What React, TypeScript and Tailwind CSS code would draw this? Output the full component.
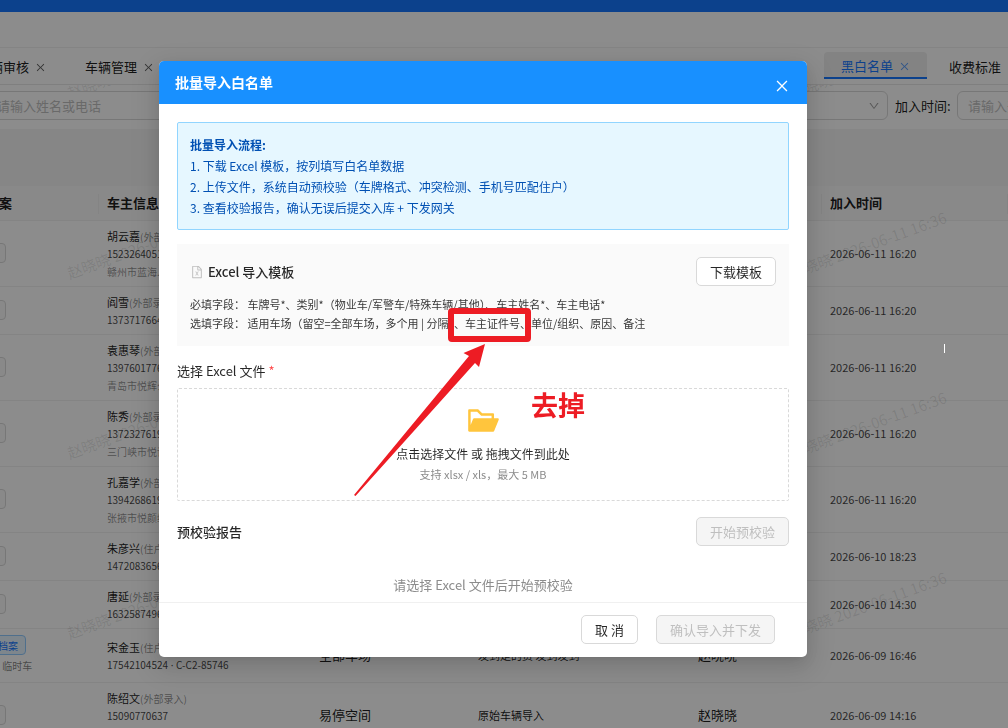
import React from 'react';
import { AiFillFolderOpen, AiOutlineClose, AiOutlineDown, AiOutlineFileExcel } from 'react-icons/ai';

const tabs = ['车辆审核', '车辆管理', '车位管理', '车场管理', '月卡管理', '订单管理', '通行记录', '设备管理', '黑白名单', '收费标准'];

type Row = {
  name: string;
  source: string;
  phone: string;
  room?: string;
  address?: string;
  lot: string;
  reason: string;
  time: string;
};

const rows: Row[] = [
  { name: '胡云嘉', source: '(外部录入)', phone: '15232640518', address: '赣州市蓝海人家', lot: '全部车场', reason: '原始车辆导入', time: '2026-06-11 16:20' },
  { name: '阎雪', source: '(外部录入)', phone: '13737176643', lot: '全部车场', reason: '原始车辆导入', time: '2026-06-11 16:20' },
  { name: '袁惠琴', source: '(外部录入)', phone: '13976017765', address: '青岛市悦辉公司', lot: '全部车场', reason: '原始车辆导入', time: '2026-06-11 16:20' },
  { name: '陈秀', source: '(外部录入)', phone: '13723276190', address: '三门峡市悦评', lot: '全部车场', reason: '原始车辆导入', time: '2026-06-11 16:20' },
  { name: '孔嘉学', source: '(外部录入)', phone: '13942686197', address: '张掖市悦颜维', lot: '全部车场', reason: '原始车辆导入', time: '2026-06-11 16:20' },
  { name: '朱彦兴', source: '(住户)', phone: '14720836561', lot: '全部车场', reason: '原始车辆导入', time: '2026-06-10 18:23' },
  { name: '唐延', source: '(外部录入)', phone: '16325874963', lot: '全部车场', reason: '原始车辆导入', time: '2026-06-10 14:30' },
  { name: '宋金玉', source: '(住户)', phone: '17542104524', room: 'C-C2-85746', lot: '全部车场', reason: '发到走的费 发到发到', time: '2026-06-09 16:46' },
  { name: '陈绍文', source: '(外部录入)', phone: '15090770637', address: '信阳市', lot: '易停空间', reason: '原始车辆导入', time: '2026-06-09 14:16' },
];

const steps = [
  '1. 下载 Excel 模板，按列填写白名单数据',
  '2. 上传文件，系统自动预校验（车牌格式、冲突检测、手机号匹配住户）',
  '3. 查看校验报告，确认无误后提交入库 + 下发网关',
];

const TabBar: React.FC = () => (
  <nav className="flex gap-[5px] h-9 pt-1 -ml-10 w-max">
    {tabs.map((tab) => (
      <button
        key={tab}
        className={`w-[103px] h-[27px] shrink-0 flex items-center justify-center gap-1.5 pt-0.5 text-[13px] rounded-t ${
          tab === '黑白名单' ? 'bg-[#eeeeee] text-[#1677ff] border-b-2 border-[#1677ff]' : 'text-black/90'
        }`}
      >
        {tab}
        <AiOutlineClose size={11} className="mt-0.5 opacity-70" />
      </button>
    ))}
  </nav>
);

const FilterBar: React.FC = () => (
  <div className="flex items-center h-11 pb-[3px] -ml-4">
    <input
      aria-label="车主"
      placeholder="请输入姓名或电话"
      className="relative z-20 w-60 h-[29px] px-3 text-[13px] bg-white border border-[#d9d9d9] rounded placeholder:text-[#bfbfbf]"
    />
    <div className="flex-1" />
    <div className="relative z-20 w-40">
      <select aria-label="车场" className="w-full h-[29px] px-3 text-[13px] bg-white border border-[#d9d9d9] rounded-md appearance-none" />
      <AiOutlineDown size={12} className="absolute right-2 top-[9px] text-[#a0a0a0]" />
    </div>
    <label htmlFor="joined" className="w-[69px] pl-[7px] text-[13px] text-black/90">
      加入时间:
    </label>
    <input
      id="joined"
      placeholder="请输入开始时间"
      className="relative z-20 w-60 -mr-[189px] h-[29px] shrink-0 px-2.5 text-[13px] bg-white border border-[#d9d9d9] rounded-md placeholder:text-[#bfbfbf]"
    />
  </div>
);

const Th: React.FC<{ width?: string; children: React.ReactNode }> = ({ width = '', children }) => (
  <th className={`relative h-[34px] px-2 text-left text-[13px] font-bold text-black/90 ${width}`}>
    {children}
    <span className="absolute right-0 top-2 h-5 w-px bg-[#f0f0f0]" />
  </th>
);

const ListTable: React.FC = () => (
  <div className="-ml-12">
    <table className="w-full table-fixed border-collapse text-[11px] text-black/90">
      <thead>
        <tr className="bg-[#fafafa] border-b border-[#f0f0f0]">
          <Th width="w-[147px]">车辆档案</Th>
          <Th width="w-[212px]">车主信息</Th>
          <Th width="w-[159px]">适用车场</Th>
          <Th width="w-[220px]">原因</Th>
          <Th width="w-[132px]">操作人</Th>
          <Th>加入时间</Th>
        </tr>
      </thead>
      <tbody>
        {rows.map((row) => (
          <tr key={row.phone} className={`border-b border-[#f0f0f0] ${row.room ? 'h-[54px]' : ''}`}>
            <td className="px-2 text-[10px] whitespace-nowrap">
              {row.room ? (
                <>
                  <button className="block h-5 px-[7px] rounded border border-[#91caff] bg-[#e6f4ff] text-[#1677ff]">已关联档案</button>
                  <span className="block leading-[18px] mt-0.5 text-black/50">车辆类型 临时车</span>
                </>
              ) : (
                <button className="block h-5 px-[7px] rounded border border-[#d9d9d9] bg-[#fafafa]">未建档</button>
              )}
            </td>
            <td className="px-2 pt-[6px] pb-[5px] leading-[18px] whitespace-nowrap">
              <div className="h-[18px]">
                {row.name}
                <span className="text-[10px] text-black/45">{row.source}</span>
              </div>
              <div className="h-[18px] text-[10px] text-black/75">
                {row.phone}
                {row.room && (
                  <>
                    <span className="font-['Noto_Sans']"> · </span>
                    {row.room}
                  </>
                )}
              </div>
              {row.address && <div className="h-[18px] text-[10px] text-black/45">{row.address}</div>}
            </td>
            <td className="px-2 text-[13px]">{row.lot}</td>
            <td className="px-2">{row.reason}</td>
            <td className="px-2 text-[13px]">赵晓晓</td>
            <td className="px-2 text-black/75">{row.time}</td>
          </tr>
        ))}
      </tbody>
    </table>
  </div>
);

// Repeated user stamp laid over the list page
const Watermark: React.FC = () => (
  <div className="absolute inset-0 z-10 overflow-hidden pointer-events-none" aria-hidden="true">
    <div className="absolute left-[71px] -top-0.5 grid grid-cols-[361px_361px_361px] auto-rows-[180px] text-[15px] leading-5 text-black/10 whitespace-nowrap">
      {Array.from({ length: 12 }, (_, i) => (
        <span key={i} className="origin-bottom-left -rotate-20 h-5 w-max">
          赵晓晓 2026-06-11 16:36
        </span>
      ))}
    </div>
  </div>
);

const Annotation: React.FC = () => (
  <>
    <div className="absolute left-[289px] top-[247px] w-[83px] h-[34px] border-[6px] border-[#ed1c24] rounded-sm" />
    <svg className="absolute left-[195px] top-[282px]" width="132" height="154" viewBox="0 0 132 154" fill="#ed1c24">
      <path d="M131 1 L109.500 10 L115 13 L0 152 L1.500 153 L121 20 L125 24 Z" />
    </svg>
    <span className="absolute left-[372px] top-[324px] text-[27px] leading-10 font-bold text-[#ed1c24]">去掉</span>
  </>
);

const ImportDialog: React.FC = () => (
  <div
    role="dialog"
    aria-labelledby="import-title"
    className="relative w-[648px] bg-white rounded-[5px] text-black/85 shadow-[0_6px_16px_rgba(0,0,0,0.08),0_3px_6px_-4px_rgba(0,0,0,0.12),0_9px_28px_8px_rgba(0,0,0,0.1)]"
  >
    <header className="flex items-center justify-between h-[43px] pl-4 pr-[17px] bg-[#1890ff] rounded-t-[5px] text-white">
      <h2 id="import-title" className="text-[14px] font-bold">批量导入白名单</h2>
      <button aria-label="关闭" className="pt-[7px]">
        <AiOutlineClose size={16} />
      </button>
    </header>

    <div className="px-[18px] pt-[18px]">
      <section className="px-3 py-[11px] bg-[#e6f7ff] border border-[#91d5ff] rounded-xs text-[12px] leading-[21px] text-[#0050b3]">
        <p className="font-bold">批量导入流程:</p>
        {steps.map((step) => (
          <p key={step}>{step}</p>
        ))}
      </section>

      <section className="mt-[14px] p-[13px] bg-[#fafafa]">
        <div className="flex items-center justify-between">
          <h3 className="flex items-center gap-1 text-[13px] font-medium">
            <AiOutlineFileExcel size={14} className="text-[#bfbfbf]" />
            Excel 导入模板
          </h3>
          <button className="h-[29px] px-[13px] text-[13px] bg-white border border-[#d9d9d9] rounded-[5px]">下载模板</button>
        </div>
        <div className="mt-[9px] text-[11px] leading-[19px] text-black/80">
          <p>必填字段： 车牌号*、类别*（物业车/军警车/特殊车辆/其他）、车主姓名*、车主电话*</p>
          <p>选填字段： 适用车场（留空=全部车场，多个用 | 分隔）、车主证件号、单位/组织、原因、备注</p>
        </div>
      </section>

      <label htmlFor="excel-file" className="block mt-[15px] mb-[7px] text-[13px] leading-5">
        选择 Excel 文件 <span className="text-[#ff4d4f]">*</span>
      </label>
      <label className="flex flex-col items-center h-[113px] pt-[14px] border border-dashed border-[#d9d9d9] rounded-xs cursor-pointer">
        <input id="excel-file" type="file" accept=".xlsx,.xls" className="sr-only" />
        <AiFillFolderOpen size={35} className="text-[#ffc53d]" />
        <span className="mt-1.5 text-[12px] leading-5">点击选择文件 或 拖拽文件到此处</span>
        <span className="text-[11px] leading-5 text-[#8c8c8c]">支持 xlsx / xls，最大 5 MB</span>
      </label>

      <div className="flex items-center justify-between mt-4">
        <h3 className="text-[13px] font-medium">预校验报告</h3>
        <button disabled className="h-[29px] px-[13px] text-[13px] bg-[#f5f5f5] text-[#bfbfbf] border border-[#d9d9d9] rounded-[5px]">
          开始预校验
        </button>
      </div>
      <p className="mt-[29px] h-[27px] text-center text-[13px] leading-5 text-[#8c8c8c]">请选择 Excel 文件后开始预校验</p>
    </div>

    <footer className="flex justify-end gap-[18px] pt-3 pb-[13px] pr-8 border-t border-[#f0f0f0]">
      <button className="h-[29px] px-[13px] text-[13px] bg-white border border-[#d9d9d9] rounded-[5px]">取 消</button>
      <button disabled className="h-[29px] px-[13px] text-[13px] bg-[#f5f5f5] text-[#bfbfbf] border border-[#d9d9d9] rounded-[5px]">
        确认导入并下发
      </button>
    </footer>

    <Annotation />
  </div>
);

const App: React.FC = () => {
  return (
    <div className="h-screen overflow-hidden bg-white font-['Noto_Sans_CJK_SC',sans-serif]">
      <div className="h-3 bg-[#1677ff]" />
      <div className="h-9 border-b border-[#f0f0f0]" />
      <div className="border-b border-[#e8e8e8]">
        <TabBar />
      </div>
      <main className="relative">
        <FilterBar />
        <div className="h-[57px] bg-[#f5f5f5]" />
        <ListTable />
        <Watermark />
      </main>

      {/* Modal layer */}
      <div className="fixed inset-0 z-30 flex items-start justify-center pt-[61px] pr-[42px] bg-black/45">
        <ImportDialog />
        <span className="absolute left-[944px] top-[344px] w-px h-[9px] bg-white" />
      </div>
    </div>
  );
};

export default App;
